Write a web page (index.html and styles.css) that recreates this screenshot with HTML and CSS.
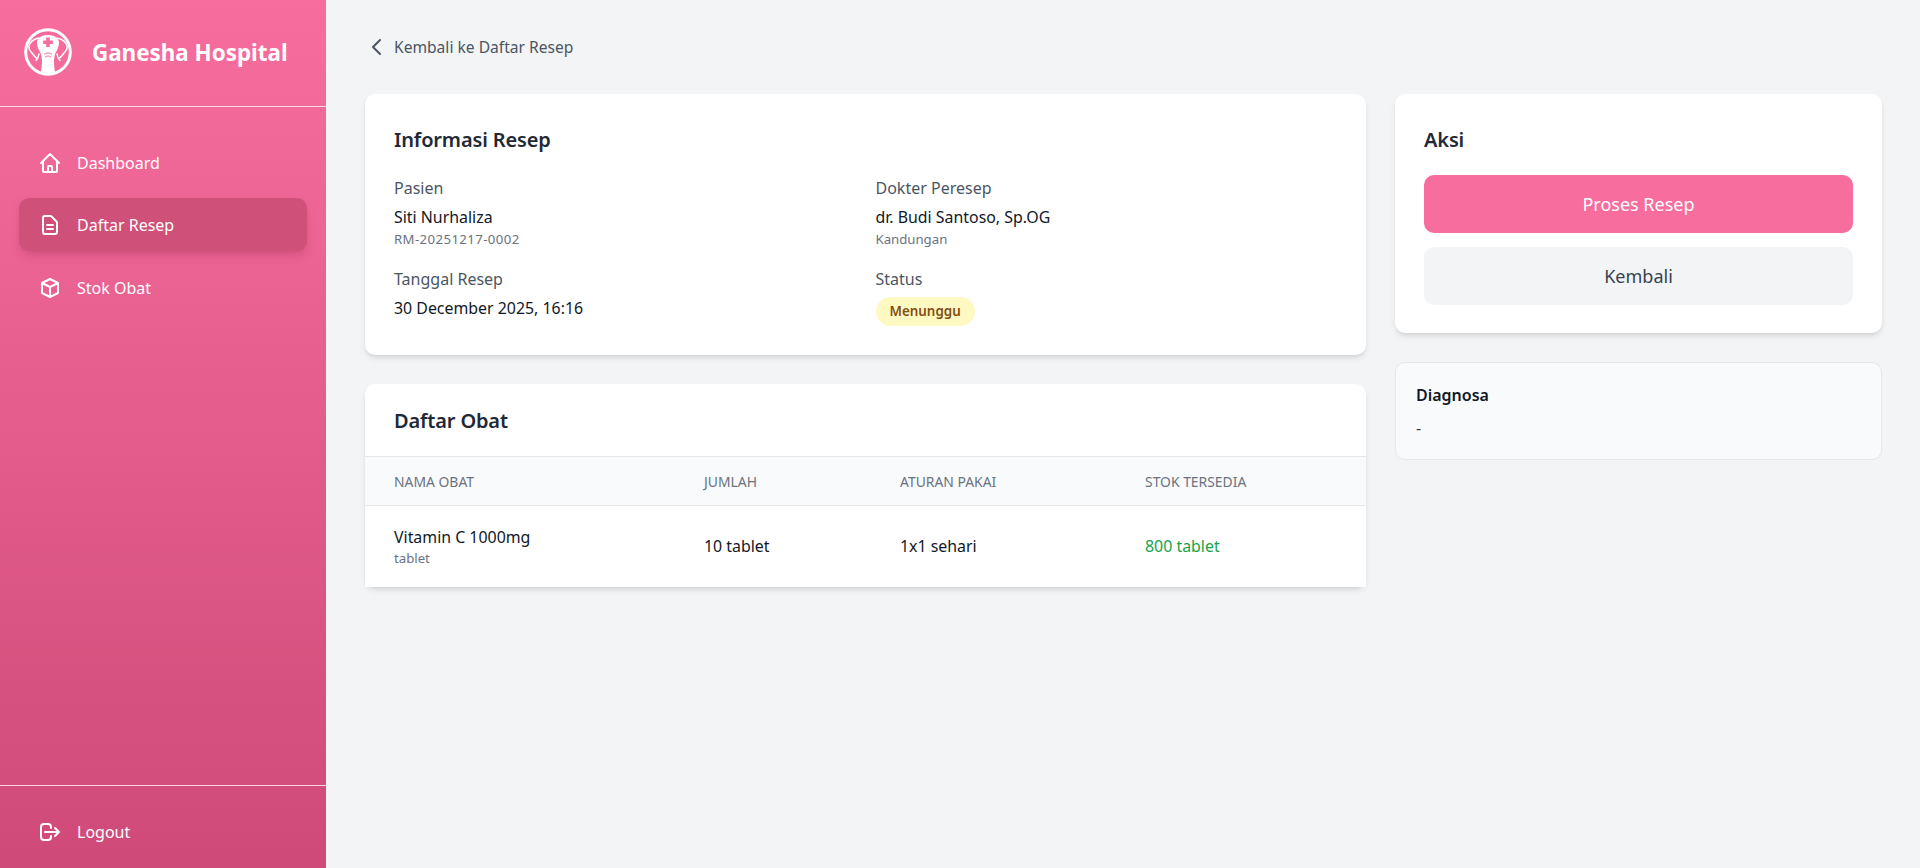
FILE: index.html
```html
<!DOCTYPE html>
<html lang="id">
<head>
<meta charset="utf-8">
<title>Ganesha Hospital</title>
<link rel="stylesheet" href="styles.css">
</head>
<body>
<div class="app">
  <aside class="sidebar">
    <div class="brand">
      <svg class="logo" viewBox="0 0 48 48" fill="none">
        <circle cx="24" cy="24" r="22.3" stroke="#fff" stroke-width="3"/>
        <path d="M15 10c-5 1-9 4-10 8-.6 3 1 5 3 7 2 2.400 3 4 5 5.500" stroke="#fff" stroke-width="1.500" stroke-linecap="round"/>
        <path d="M33 10c5 1 9 4 10 8 .6 3-1 5-3 7-2 2.400-3 4-5 5.500" stroke="#fff" stroke-width="1.500" stroke-linecap="round"/>
        <path d="M24 7c6.500 0 11 3 11 8 0 4-2 7-3.500 10-1 2-1 4-1.500 7 0 5 .5 8 1 12-4 1.300-10 1.300-14 0 .5-4 1-7 1-12-.5-3-.5-5-1.500-7-1.500-3-3.500-6-3.500-10 0-5 4.500-8 11-8z" fill="#fff"/>
        <path d="M22.200 9.500h3.600v3h3v3.600h-3v3h-3.600v-3h-3v-3.600h3z" fill="#f76d9d"/>
        <path d="M20 26.500c2-2 6-2 8 0M21 29c2-1.300 4-1.300 6 0" stroke="#f76d9d" stroke-width="1"/>
        <path d="M15 26c-.5 3-1.500 5-3 6.500M33 26c.5 3 1.500 5 3 6.500" stroke="#fff" stroke-width="1.500" stroke-linecap="round"/>
      </svg>
      <span class="brand-name">Ganesha Hospital</span>
    </div>
    <nav class="nav">
      <a class="nav-item">
        <svg class="icon" viewBox="0 0 24 24"><path d="M3 12l2-2m0 0l7-7 7 7M5 10v10a1 1 0 001 1h3m10-11l2 2m-2-2v10a1 1 0 01-1 1h-3m-6 0a1 1 0 001-1v-4a1 1 0 011-1h2a1 1 0 011 1v4a1 1 0 001 1m-6 0h6"/></svg>
        <span>Dashboard</span>
      </a>
      <a class="nav-item active">
        <svg class="icon" viewBox="0 0 24 24"><path d="M9 12h6m-6 4h6m2 5H7a2 2 0 01-2-2V5a2 2 0 012-2h5.586a1 1 0 01.707.293l5.414 5.414a1 1 0 01.293.707V19a2 2 0 01-2 2z"/></svg>
        <span>Daftar Resep</span>
      </a>
      <a class="nav-item">
        <svg class="icon" viewBox="0 0 24 24"><path d="M20 7l-8-4-8 4m16 0l-8 4m8-4v10l-8 4m0-10L4 7m8 4v10M4 7v10l8 4"/></svg>
        <span>Stok Obat</span>
      </a>
    </nav>
    <div class="side-foot">
      <a class="nav-item">
        <svg class="icon" viewBox="0 0 24 24"><path d="M17 16l4-4m0 0l-4-4m4 4H7m6 4v1a3 3 0 01-3 3H6a3 3 0 01-3-3V7a3 3 0 013-3h4a3 3 0 013 3v1"/></svg>
        <span>Logout</span>
      </a>
    </div>
  </aside>
  <main class="main">
    <a class="back">
      <svg class="back-icon" viewBox="0 0 24 24"><path d="M15 19l-7-7 7-7"/></svg>
      <span>Kembali ke Daftar Resep</span>
    </a>
    <div class="columns">
      <div class="col">
        <section class="card card-pad">
          <h2 class="card-title">Informasi Resep</h2>
          <div class="info-grid">
            <div class="info">
              <div class="label">Pasien</div>
              <div class="value">Siti Nurhaliza</div>
              <div class="sub code">RM-20251217-0002</div>
            </div>
            <div class="info">
              <div class="label">Dokter Peresep</div>
              <div class="value">dr. Budi Santoso, Sp.OG</div>
              <div class="sub">Kandungan</div>
            </div>
            <div class="info">
              <div class="label">Tanggal Resep</div>
              <div class="value">30 December 2025, 16:16</div>
            </div>
            <div class="info">
              <div class="label">Status</div>
              <span class="badge">Menunggu</span>
            </div>
          </div>
        </section>
        <section class="card">
          <h2 class="card-title table-title">Daftar Obat</h2>
          <table class="table">
            <colgroup>
              <col class="c1"><col class="c2"><col class="c3"><col class="c4">
            </colgroup>
            <thead>
              <tr><th>Nama Obat</th><th>Jumlah</th><th>Aturan Pakai</th><th>Stok Tersedia</th></tr>
            </thead>
            <tbody>
              <tr>
                <td><div class="value">Vitamin C 1000mg</div><div class="sub">tablet</div></td>
                <td>10 tablet</td>
                <td>1x1 sehari</td>
                <td class="stock">800 tablet</td>
              </tr>
            </tbody>
          </table>
        </section>
      </div>
      <div class="col">
        <section class="card card-pad aksi">
          <h2 class="card-title">Aksi</h2>
          <div class="actions">
            <button class="btn btn-primary">Proses Resep</button>
            <button class="btn btn-muted">Kembali</button>
          </div>
        </section>
        <section class="note">
          <h3 class="note-title">Diagnosa</h3>
          <p class="note-text">-</p>
        </section>
      </div>
    </div>
  </main>
</div>
</body>
</html>
```
FILE: styles.css
```css
* { box-sizing: border-box; }
html, body { margin: 0; height: 100%; }
body {
  font-family: "Noto Sans", "Open Sans", sans-serif;
  background: #f3f4f6;
  color: #111827;
  overflow: hidden;
}
.app { display: flex; height: 868px; }
.sidebar {
  width: 326px;
  flex: none;
  display: flex;
  flex-direction: column;
  color: #fff;
  background: linear-gradient(180deg, #f76e9e 0%, #cf4a78 100%);
}
.brand {
  height: 107px;
  padding: 0 24px 2px;
  display: flex;
  align-items: center;
  gap: 20px;
  border-bottom: 1px solid rgba(255,255,255,.75);
}
.logo { width: 48px; height: 48px; flex: none; }
.brand-name { font-size: 22.4px; font-weight: 700; white-space: nowrap; }
.nav {
  flex: 1;
  padding: 29px 19px 0;
  display: flex;
  flex-direction: column;
  gap: 9px;
}
.nav-item {
  height: 53px;
  padding: 0 19px;
  display: flex;
  align-items: center;
  gap: 15px;
  font-size: 16px;
  border-radius: 10px;
  color: #fff;
}
.nav-item.active {
  margin-bottom: 1px;
  background: #cf5079;
  box-shadow: 0 6px 12px -2px rgba(120,20,60,.18), 0 3px 6px -3px rgba(120,20,60,.15);
}
.icon {
  width: 24px;
  height: 24px;
  flex: none;
  fill: none;
  stroke: #fff;
  stroke-width: 2;
  stroke-linecap: round;
  stroke-linejoin: round;
}
.side-foot {
  height: 83px;
  padding: 19px 19px 0;
  border-top: 1px solid rgba(255,255,255,.75);
}
.main { flex: 1; min-width: 0; padding: 36px 38px 0 39px; }
.back {
  height: 22px;
  margin-bottom: 36px;
  display: flex;
  align-items: center;
  gap: 5px;
  font-size: 15.6px;
  color: #4b5563;
}
.back-icon {
  width: 24px;
  height: 24px;
  flex: none;
  fill: none;
  stroke: #4b5563;
  stroke-width: 2;
  stroke-linecap: round;
  stroke-linejoin: round;
}
.columns { display: grid; grid-template-columns: 1fr 487px; gap: 29px; align-items: start; }
.col { display: flex; flex-direction: column; gap: 29px; }
.card {
  background: #fff;
  border-radius: 10px;
  box-shadow: 0 4px 6px -1px rgba(0,0,0,.1), 0 2px 4px -2px rgba(0,0,0,.1);
}
.card-pad { padding: 29px; }
.aksi { padding-bottom: 28px; }
.card-title { margin: 0; font-size: 20px; letter-spacing: -.15px; line-height: 34px; font-weight: 600; color: #1f2937; }
.info-grid {
  margin-top: 20px;
  display: grid;
  grid-template-columns: 1fr 1fr;
  column-gap: 20px;
  row-gap: 20px;
}
.label { font-size: 16px; line-height: 22px; color: #4b5563; }
.value { font-size: 15.9px; line-height: 22px; margin-top: 7px; color: #111827; }
.sub { font-size: 13.2px; line-height: 18px; margin-top: 2px; color: #6b7280; }
.code { letter-spacing: .4px; }
.badge {
  display: inline-block;
  margin-top: 7px;
  height: 29px;
  padding: 0 14px;
  border-radius: 15px;
  background: #fef9c3;
  color: #854d0e;
  font-size: 13.4px;
  font-weight: 600;
  line-height: 29px;
}
.table-title { padding: 20px 29px 0; height: 72px; }
.table { width: 100%; border-collapse: collapse; table-layout: fixed; background: #fff; }
.c1 { width: 310px; }
.c2 { width: 196px; }
.c3 { width: 245px; }
.table th {
  height: 49px;
  padding: 0 0 0 29px;
  text-align: left;
  font-size: 13.9px;
  font-weight: 400;
  text-transform: uppercase;
  color: #6b7280;
  background: #f9fafb;
  border-top: 1px solid #e5e7eb;
  border-bottom: 1px solid #e5e7eb;
}
.table td { height: 81px; padding: 0 0 0 29px; font-size: 15.9px; color: #111827; }
.table td .value { margin-top: 0; }
.table td .sub { margin-top: 1px; }
.table td.stock { color: #16a34a; }
.actions { margin-top: 18px; display: flex; flex-direction: column; gap: 14px; }
.btn {
  height: 58px;
  border: 0;
  border-radius: 10px;
  font-family: inherit;
  font-size: 18px;
  padding: 0;
}
.btn-primary { background: #f76d9d; color: #fff; }
.btn-muted { background: #f3f4f6; color: #374151; }
.note {
  height: 98px;
  padding: 21px 20px;
  background: #f9fafb;
  border: 1px solid #e5e7eb;
  border-radius: 10px;
}
.note-title { margin: 0; font-size: 16px; line-height: 22px; font-weight: 600; color: #111827; }
.note-text { margin: 11px 0 0; font-size: 16px; line-height: 22px; color: #374151; }
```
